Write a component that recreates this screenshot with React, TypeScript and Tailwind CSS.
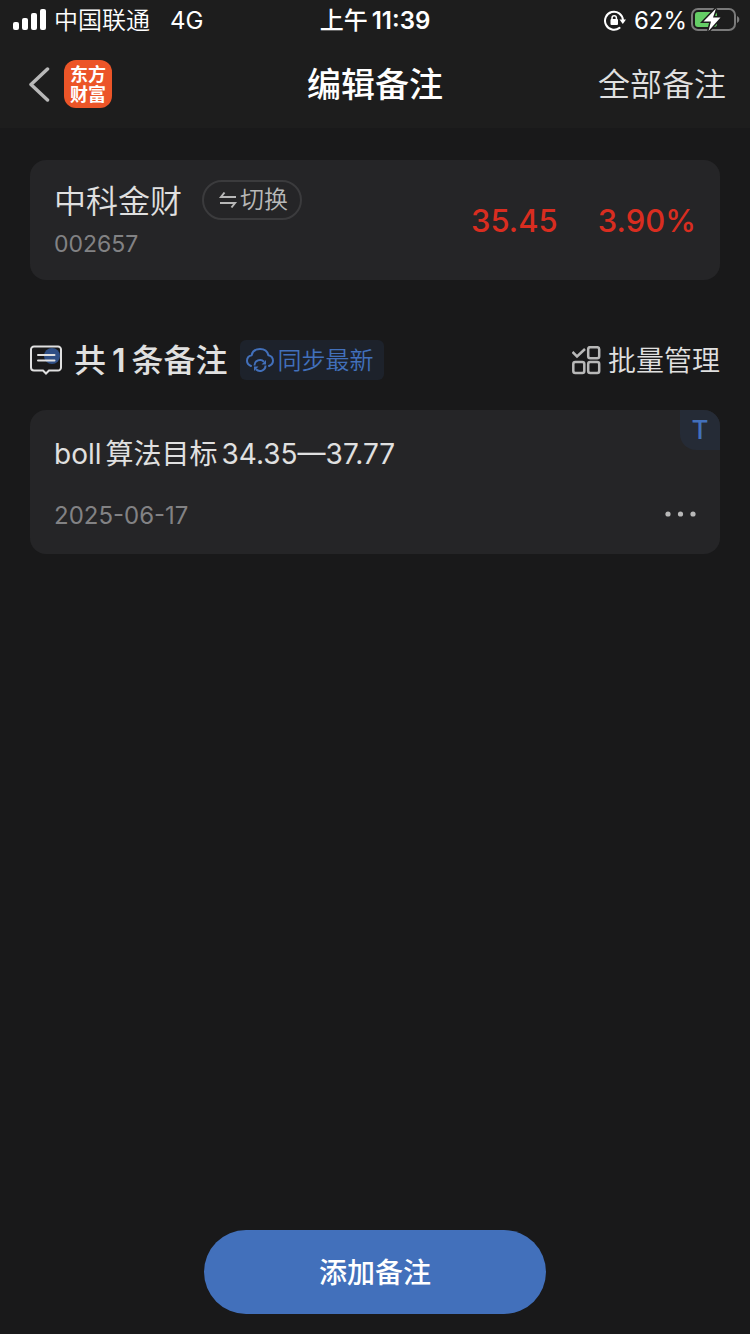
import React, { useState } from 'react';

interface Note {
  id: number;
  content: string[];
  date: string;
}

const notes: Note[] = [{ id: 1, content: ['boll', '算法目标', '34.35—37.77'], date: '2025-06-17' }];

const StatusBar: React.FC = () => (
  <div className="grid h-10 grid-cols-[1fr_auto_1fr] items-center px-3 pt-0.5 text-2xl leading-8 text-white">
    <div className="flex items-center gap-2">
      <svg width="34" height="24" viewBox="0 0 34 24" fill="currentColor" aria-hidden="true">
        <rect x="1" y="13" width="6" height="8" rx="2" />
        <rect x="10" y="9" width="6" height="12" rx="2" />
        <rect x="19" y="4" width="6" height="17" rx="2" />
        <rect x="28" y="0" width="6" height="21" rx="2" />
      </svg>
      <span className="font-[350]">中国联通</span>
      <span className="ml-3">4G</span>
    </div>
    <div className="flex gap-1 font-semibold">
      <span className="font-medium">上午</span>
      <span>11:39</span>
    </div>
    <div className="flex items-center justify-end gap-1">
      <svg className="mr-1" width="22" height="22" viewBox="0 0 22 22" fill="none" aria-hidden="true">
        <path d="M15.500 17.900A9 9 0 1 1 19 10" stroke="currentColor" strokeWidth="2" strokeLinecap="round" />
        <path d="M15.500 9.500h6.500l-3.200 4.500z" fill="currentColor" />
        <rect x="6.500" y="9" width="7.500" height="6" rx="1" fill="currentColor" />
        <path d="M8 10V7.900a2.200 2.200 0 0 1 4.400 0V10" stroke="currentColor" strokeWidth="1.500" />
      </svg>
      <span>62%</span>
      <svg className="overflow-visible" width="47" height="26" viewBox="0 1 47 26" fill="none" aria-hidden="true">
        <rect x="1" y="2" width="43" height="21" rx="6" stroke="#7a7a7a" strokeWidth="2" />
        <path d="M46 9c1.700.8 2.300 2 2.300 3.500S47.700 15.200 46 16z" fill="#7a7a7a" />
        <rect x="4" y="5" width="22" height="15" rx="3" fill="#65ce66" />
        <path d="M25 1.500 12.500 14.500h7.500L17.500 24 29.500 10.500H22z" fill="#fff" stroke="#1d1d1d" strokeWidth="3" paintOrder="stroke" />
      </svg>
    </div>
  </div>
);

const Header: React.FC = () => (
  <header className="bg-[#1d1d1d]">
    <StatusBar />
    <nav className="grid h-22 grid-cols-[1fr_auto_1fr] items-center px-6">
      <div className="flex items-center gap-3">
        <button type="button" aria-label="返回">
          <svg width="28" height="36" viewBox="-4 0 28 36" fill="none">
            <path d="M19.500 3 3 18.500 19.500 34" stroke="#b8b8b8" strokeWidth="3.500" strokeLinecap="round" strokeLinejoin="round" />
          </svg>
        </button>
        <div className="flex size-12 flex-col items-center justify-center rounded-xl bg-[#ec5528] pt-0.5 text-lg leading-5 font-bold text-white">
          <span>东方</span>
          <span>财富</span>
        </div>
      </div>
      <h1 className="pt-0.5 text-[34px] leading-10 font-medium text-white">编辑备注</h1>
      <button type="button" className="justify-self-end pt-0.5 text-[32px] leading-10 font-[350] text-[#e0e0e0]">
        全部备注
      </button>
    </nav>
  </header>
);

const StockCard: React.FC = () => (
  <section className="flex h-30 justify-between rounded-2xl bg-[#252527] px-6">
    <div className="pt-[18px]">
      <div className="flex items-center gap-5">
        <h2 className="pt-1 text-[32px] leading-10 font-[350] text-[#e0e0e0]">中科金财</h2>
        <button
          type="button"
          className="flex h-10 items-center gap-0.5 rounded-full border-2 border-[#3b3b3d] px-3 text-2xl leading-8 font-[350] text-[#b8b8b8]"
        >
          <svg width="22" height="20" viewBox="0 0 22 20" fill="none" stroke="currentColor" strokeWidth="2" aria-hidden="true">
            <path d="M20 7H5l3.500-4.500M4 13h15l-3.500 4.500" />
          </svg>
          切换
        </button>
      </div>
      <p className="mt-0.5 text-[23px] leading-10 text-[#828284]">002657</p>
    </div>
    <div className="flex items-center gap-10 pt-0.5 text-[31px] leading-10 font-medium text-[#d92d20]">
      <span>35.45</span>
      <span>3.90%</span>
    </div>
  </section>
);

const NoteCard: React.FC<{ note: Note }> = ({ note }) => (
  <article className="relative rounded-2xl bg-[#252527] px-6 pt-6 pb-4.5">
    <span className="absolute top-0 right-0 flex size-10 items-center justify-center rounded-tr-2xl rounded-bl-2xl bg-[#252b36] text-[26px] leading-8 font-medium text-[#4270bb]">
      T
    </span>
    <p className="flex gap-1 text-[28px] leading-10 text-[#e0e0e0]">
      {note.content.map((part) => (
        <span key={part}>{part}</span>
      ))}
    </p>
    <div className="mt-5.5 flex items-center justify-between">
      <time className="text-2xl leading-10 text-[#828284]">{note.date}</time>
      <button type="button" aria-label="更多">
        <svg width="32" height="12" viewBox="0 0 32 12" fill="#b8b8b8">
          <circle cx="4" cy="4" r="2.600" />
          <circle cx="16.500" cy="4" r="2.600" />
          <circle cx="29" cy="4" r="2.600" />
        </svg>
      </button>
    </div>
  </article>
);

export default function App() {
  const [list] = useState<Note[]>(notes);

  return (
    <div className="flex min-h-screen flex-col bg-[#19191a] font-['Inter','Noto_Sans_CJK_SC',sans-serif]">
      <Header />

      <main className="flex-1 px-[30px] pt-8">
        <StockCard />

        {/* Toolbar */}
        <div className="mt-15 mb-[30px] flex h-10 items-center justify-between">
          <div className="flex items-center gap-3">
            <svg width="32" height="30" viewBox="0 0 32 30" fill="none" aria-hidden="true">
              <circle cx="22" cy="11" r="8" fill="#2f4f85" />
              <path
                d="M4 1.500h24a3 3 0 0 1 3 3v18a3 3 0 0 1-3 3h-9l-3 3-3-3H4a3 3 0 0 1-3-3v-18a3 3 0 0 1 3-3z"
                stroke="#e0e0e0"
                strokeWidth="2"
              />
              <path d="M8 10h16.500M8 15.500h16.500" stroke="#e0e0e0" strokeWidth="2" strokeLinecap="round" />
            </svg>
            <h2 className="flex gap-1.5 pt-0.5 text-[32px] leading-10 font-medium text-[#e0e0e0]">
              <span>共</span>
              <span className="font-semibold">{list.length}</span>
              <span>条备注</span>
            </h2>
            <button
              type="button"
              className="flex h-10 items-center gap-1 rounded-md bg-[#1d222b] pt-0.5 pl-1.5 pr-2.5 text-2xl leading-8 font-[350] text-[#4270bb]"
            >
              <svg width="28" height="26" viewBox="0 0 28 26" fill="none" stroke="currentColor" strokeWidth="2" aria-hidden="true">
                <path d="M5 18C2.500 17 1 15 1 12.800c0-3 2-5 4.600-5.600C6.500 3.500 9.800 1 14 1s7.500 2.500 8.400 6.200c2.600.6 4.600 2.600 4.600 5.600 0 2.200-1.500 4.200-4 5.200" strokeLinecap="round" />
                <path d="M8.500 17.500A5.500 5.500 0 0 1 18 13.700M19.500 17.500A5.500 5.500 0 0 1 10 21.300" />
                <path d="M20 12v4.500h-4.500zM8 23v-4.500h4.500z" fill="currentColor" stroke="none" />
              </svg>
              同步最新
            </button>
          </div>
          <button type="button" className="flex items-center gap-1 pt-0.5 text-[28px] leading-10 font-[350] text-[#e0e0e0]">
            <svg width="32" height="30" viewBox="1 1 32 30" fill="none" stroke="#b8b8b8" strokeWidth="2.500" aria-hidden="true">
              <path d="m1.500 7 4.500 4.500L14 4" />
              <rect x="17.200" y="2.200" width="11" height="11" rx="2" />
              <rect x="2.300" y="17" width="11" height="11" rx="2" />
              <rect x="17.200" y="17" width="11" height="11" rx="2" />
            </svg>
            批量管理
          </button>
        </div>

        {list.map((note) => (
          <NoteCard key={note.id} note={note} />
        ))}
      </main>

      <footer className="flex justify-center pb-5">
        <button type="button" className="h-21 w-[342px] rounded-full bg-[#4270bb] pt-0.5 text-[28px] leading-10 font-medium text-white">
          添加备注
        </button>
      </footer>
    </div>
  );
}
